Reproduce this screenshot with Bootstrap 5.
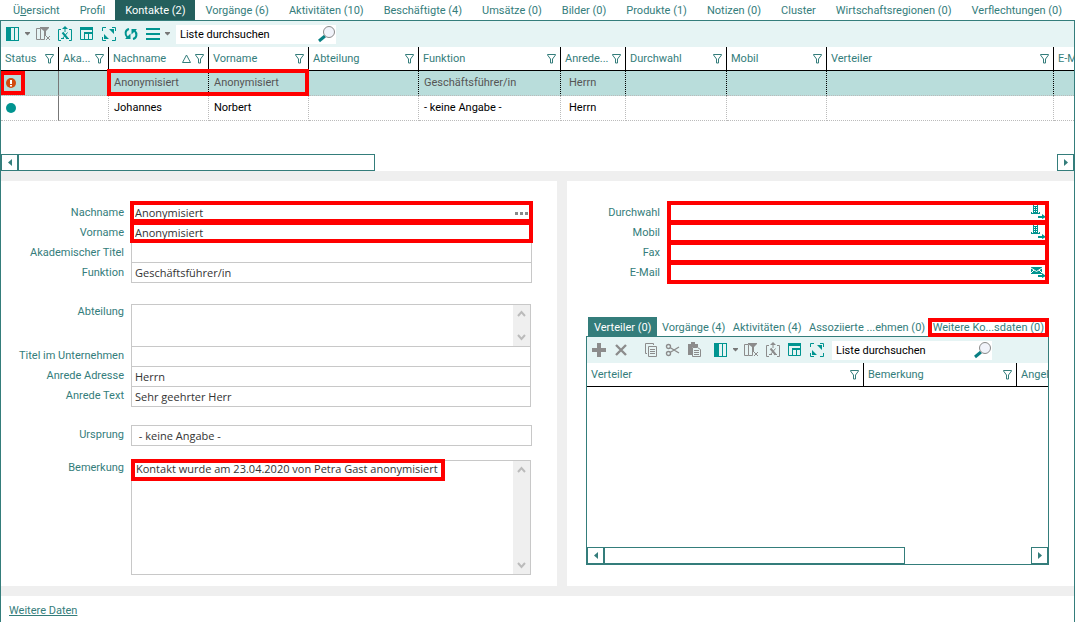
<!DOCTYPE html>
<html lang="de">
<head>
<meta charset="utf-8">
<meta name="viewport" content="width=device-width, initial-scale=1">
<title>Kontakte</title>
<link href="https://cdn.jsdelivr.net/npm/bootstrap@5.3.0/dist/css/bootstrap.min.css" rel="stylesheet">
<style>
:root{--teal:#347d7b;--dark:#245f5d;--ico:#009490;--pale:#e6f4f4;--line:#c8c8c8;--grey:#efefef}
body{font:11px/16px Roboto,"Noto Sans",sans-serif;color:#333;background:#fff}
a{color:var(--teal)}
svg{display:block;flex:none}
.ui-tabs .nav-link{padding:0 10px;line-height:22px;height:20px;color:var(--teal);white-space:nowrap;border:0;border-radius:0}
.ui-tabs .nav-link.active{background:var(--dark);color:#fff}
.main-tabs{padding:0 3px;height:20px}
.sub-tabs{padding:0 2px}
.sub-tabs .nav-link{padding:0 3px}
.sub-tabs .nav-link.active{background:var(--teal);padding:0 6px}
.frame{border:1px solid var(--teal)}
.outer{border-bottom:0;min-height:calc(100vh - 20px)}
.tools{background:var(--pale);height:26px;padding:0 4px;gap:6px}
.tools button{border:0;background:none;padding:0;color:var(--ico)}
.tools button.off{color:#8c8c8c}
.tools .caret{margin:0 -2px 0 -3px;color:#777}
.search{width:160px;height:19px;background:#fff;margin-left:1px}
.search input{border:0;outline:0;background:none;min-width:0;flex:1;padding:1px 4px 0;color:#000}
.search input::placeholder{color:#000;opacity:1}
.grid{table-layout:fixed;border-collapse:separate;border-spacing:0;width:100%;font:11px/16px Roboto,"Liberation Sans",sans-serif}
.grid th{height:24px;font-weight:400;color:var(--teal);border-right:1px solid #000;border-bottom:1px solid #000;padding:0 4px;overflow:hidden;white-space:nowrap}
.grid td{height:25px;padding:0 5px;color:#000;border-right:1px dotted #bbb;border-bottom:1px dotted #bbb;white-space:nowrap}
.grid tr.sel td{background:#b9dddb;color:#555;border-right-color:#000}
.grid tbody tr td:first-child{padding:0 4px;border-right:1px solid #777}
.grid th:last-child,.grid td:last-child{border-right:0}
.list{min-height:107px}
.hl{position:absolute;border:4px solid #f00;pointer-events:none;z-index:2}
.hl-pair{inset:-2px -101px -1px -2px}
.hl-status{inset:0 auto 0 -1px;width:25px}
.hl-row{inset:-2px -2px -1px -2px}
.hl-deep{inset:-2px -1px -2px -1px}
.hl-note{top:-2px;left:-1px;width:314px;height:22px}
.hl-tab{inset:1px -2px 0 -2px}
.hbar{height:17px}
.hbar button{width:17px;border:1px solid var(--teal);background:#fff;padding:0;color:var(--teal);display:grid;place-items:center}
.thumb{border:1px solid var(--teal)}
.band{background:var(--grey);padding:10px 0;gap:10px}
.pane{background:#fff;min-height:405px;min-width:0}
.pane-l{flex:1 1 556px;padding:21px 25px 11px 0}
.pane-r{flex:1 1 507px;padding:21px 25px 21px 19px}
.fld{height:20px}
.fld label{color:var(--teal);text-align:right;padding-right:7px;flex:none;white-space:nowrap;line-height:22px}
.pane-l label{width:130px}
.pane-r label{width:81px}
.box{position:relative;flex:1;min-width:0;border:1px solid var(--line);margin-bottom:-1px;display:flex;background:#fff}
.box input,.box textarea{font-family:"Open Sans","Noto Sans",sans-serif;border:0;outline:0;background:none;flex:1;min-width:0;padding:0 3px;color:#333;resize:none;overflow:hidden}
.short{margin-right:1px}
.up label{line-height:20px}
.tall label{line-height:16px}
.gap-a{margin-top:22px;height:42px}
.gap-b{margin-top:19px}
.gap-c{margin-top:15px;height:114px}
.vbar{width:17px;background:var(--grey);color:#bbb;padding:5px 4px}
.sub{margin-top:35px}
.sub-body{min-height:184px}
</style>
</head>
<body>
<svg width="0" height="0" class="position-absolute" aria-hidden="true">
<defs>
<symbol id="cols" viewBox="0 0 16 16"><path fill="currentColor" d="M1 1h13v14H1z"/><path fill="#e6f4f4" d="M6 2h3v12H6zM10 2h3v12h-3z"/></symbol>
<symbol id="caret" viewBox="0 0 7 16"><path fill="currentColor" d="M1 6h5v1L3.500 9.500 1 7z"/></symbol>
<symbol id="nofilter" viewBox="0 0 16 16"><path fill="none" stroke="currentColor" d="M5.500 2.500h-4v11h4v-11M5.500 13.500h4V8"/><path fill="currentColor" d="M5 1h9v1l-3 3v5H9V5L5 2z"/><path stroke="currentColor" d="M11 10l4 4m0-4l-4 4"/></symbol>
<symbol id="xls" viewBox="0 0 16 16"><path fill="none" stroke="currentColor" d="M4 3.500H1.500v11H4M12 3.500h2.500v11H12M8 2v4"/><path fill="currentColor" d="M8 0l3 3H5z"/><path stroke="currentColor" stroke-width="2" d="M5.500 6.500l5 6"/><path stroke="currentColor" d="M10.500 6.500l-5 6M4 12.500h3M9 12.500h3"/></symbol>
<symbol id="tbl" viewBox="0 0 16 16"><path fill="none" stroke="currentColor" d="M1.500 2v11.500h12V2M5.500 6.500v7M5 7h9M9.500 7v7"/><path fill="currentColor" d="M1 1h13v3H1zM5 6h9v2H5z"/></symbol>
<symbol id="expand" viewBox="0 0 16 16"><path fill="none" stroke="currentColor" d="M1.500 5V1.500H5M11 1.500h3.500V5M1.500 11v3.500H5M14.500 11v3.500H11"/><path fill="currentColor" d="M8 3h5v5zM3 8l5 5H3z"/></symbol>
<symbol id="refresh" viewBox="0 0 16 16"><path fill="none" stroke="currentColor" stroke-width="2" d="M6 3C2 4 1.500 8.500 4.500 11.500M10 13c4-1 4.500-5.500 1.500-8.500"/><path fill="currentColor" d="M2 13h5.500V7.500zM14 3H8.500v5.500z"/></symbol>
<symbol id="menu" viewBox="0 0 16 16"><path fill="currentColor" d="M1 2h14v2H1zM1 7h14v2H1zM1 12h14v2H1z"/></symbol>
<symbol id="plus" viewBox="0 0 16 16"><path fill="currentColor" d="M6 1h4v5h5v4h-5v5H6v-5H1V6h5z"/></symbol>
<symbol id="cross" viewBox="0 0 16 16"><path stroke="currentColor" stroke-width="2.400" d="M3 3l10 10M13 3L3 13"/></symbol>
<symbol id="copy" viewBox="0 0 16 16"><path fill="none" stroke="currentColor" d="M4 11.500H2.500v-10h8V3M5.500 4.500h8v10h-8zM7 7.500h5M7 9.500h5M7 11.500h5"/></symbol>
<symbol id="cut" viewBox="0 0 16 16"><g fill="none" stroke="currentColor" stroke-width="1.400"><circle cx="3.500" cy="4.500" r="2"/><circle cx="3.500" cy="11.500" r="2"/><path d="M5 5.500l9 5.500M5 10.500L14 5"/></g></symbol>
<symbol id="paste" viewBox="0 0 16 16"><path fill="currentColor" d="M1 2h3V0h4v2h3v3H5v8H1z"/><path fill="#e6f4f4" stroke="currentColor" d="M5.500 5.500h5l3 2v7h-8z"/><path stroke="currentColor" d="M7 8.500h5M7 10.500h5M7 12.500h5"/></symbol>
<symbol id="lens" viewBox="0 0 18 18"><path stroke="#087f83" stroke-width="3" d="M1 16l6-5"/><circle cx="11" cy="7" r="5.500" fill="#f1f3fa" stroke="#8a8a8a"/></symbol>
<symbol id="funnel" viewBox="0 0 9 10"><path fill="none" stroke="currentColor" d="M.5 1V.5h8V1L5.500 5v4h-2V5L.5 1z"/></symbol>
<symbol id="sort" viewBox="0 0 9 10"><path fill="none" stroke="currentColor" d="M4.500 1L8.500 8.500h-8z"/></symbol>
<symbol id="left" viewBox="0 0 4 7"><path fill="currentColor" d="M4 0v7L0 3.500z"/></symbol>
<symbol id="right" viewBox="0 0 4 7"><path fill="currentColor" d="M0 0v7l4-3.500z"/></symbol>
<symbol id="chu" viewBox="0 0 9 8"><path fill="none" stroke="currentColor" stroke-width="2" d="M1 6l3.500-4L8 6"/></symbol>
<symbol id="chd" viewBox="0 0 9 8"><path fill="none" stroke="currentColor" stroke-width="2" d="M1 2l3.500 4L8 2"/></symbol>
<symbol id="phone" viewBox="0 0 16 15"><path fill="#009490" d="M3 0h5v9h1V8h1v2H1V8h1v1h1zM8 12h4v-2l4 3-4 2v-1H8z"/><path fill="#fff" d="M4 0h3v2H4zM4 3h1v1H4zM6 3h1v1H6zM4 5h1v1H4zM6 5h1v1H6zM4 7h1v1H4zM6 7h1v1H6z"/></symbol>
<symbol id="mail" viewBox="0 0 16 15"><path fill="#009490" d="M1 3h11v7H1zM8 11h4V9l4 3-4 2v-1H8z"/><path fill="none" stroke="#fff" d="M1 4l5.500 3.500L12 4M1 9l3-3M12 9L9 6"/></symbol>
</defs>
</svg>

<nav class="nav nav-tabs ui-tabs main-tabs border-0 flex-nowrap justify-content-between">
<a class="nav-link" href="#">Ü<u>b</u>ersicht</a><a class="nav-link" href="#">Profil</a><a class="nav-link active" href="#">Kontakte (2)</a><a class="nav-link" href="#">Vorgänge (6)</a><a class="nav-link" href="#">Aktivitäten (10)</a><a class="nav-link" href="#">Beschäftigte (4)</a><a class="nav-link" href="#">Umsätze (0)</a><a class="nav-link" href="#">Bilder (0)</a><a class="nav-link" href="#">Produkte (1)</a><a class="nav-link" href="#">Notizen (0)</a><a class="nav-link" href="#">Cluster</a><a class="nav-link" href="#">Wirtschaftsregionen (0)</a><a class="nav-link" href="#">Verflechtungen (0)</a>
</nav>

<main class="frame outer">
<div class="tools d-flex align-items-center" role="toolbar">
<button aria-label="Spalten"><svg width="16" height="16"><use href="#cols"/></svg></button>
<button class="caret" aria-label="Spaltenmenü"><svg width="7" height="16"><use href="#caret"/></svg></button>
<button class="off" aria-label="Filter entfernen"><svg width="16" height="16"><use href="#nofilter"/></svg></button>
<button aria-label="Excel-Export"><svg width="16" height="16"><use href="#xls"/></svg></button>
<button aria-label="Tabelle"><svg width="16" height="16"><use href="#tbl"/></svg></button>
<button aria-label="Vergrößern"><svg width="16" height="16"><use href="#expand"/></svg></button>
<button aria-label="Aktualisieren"><svg width="16" height="16"><use href="#refresh"/></svg></button>
<button aria-label="Menü"><svg width="16" height="16"><use href="#menu"/></svg></button>
<button class="caret" aria-label="Weitere Aktionen"><svg width="7" height="16"><use href="#caret"/></svg></button>
<div class="search d-flex align-items-center"><input type="text" aria-label="Liste durchsuchen" placeholder="Liste durchsuchen"><svg width="18" height="18"><use href="#lens"/></svg></div>
</div>

<section class="list d-flex flex-column justify-content-between overflow-hidden">
<table class="grid">
<colgroup><col style="width:58px"><col style="width:50px"><col style="width:100px"><col style="width:100px"><col style="width:110px"><col style="width:142px"><col style="width:65px"><col style="width:101px"><col style="width:100px"><col style="width:227px"><col></colgroup>
<thead><tr>
<th><div class="d-flex justify-content-between align-items-center">Status<svg width="9" height="10"><use href="#funnel"/></svg></div></th>
<th><div class="d-flex justify-content-between align-items-center">Aka...<svg width="9" height="10"><use href="#funnel"/></svg></div></th>
<th><div class="d-flex align-items-center gap-1"><span class="me-auto">Nachname</span><svg width="9" height="10"><use href="#sort"/></svg><svg width="9" height="10"><use href="#funnel"/></svg></div></th>
<th><div class="d-flex justify-content-between align-items-center">Vorname<svg width="9" height="10"><use href="#funnel"/></svg></div></th>
<th><div class="d-flex justify-content-between align-items-center">Abteilung<svg width="9" height="10"><use href="#funnel"/></svg></div></th>
<th><div class="d-flex justify-content-between align-items-center">Funktion<svg width="9" height="10"><use href="#funnel"/></svg></div></th>
<th><div class="d-flex justify-content-between align-items-center">Anrede...<svg width="9" height="10"><use href="#funnel"/></svg></div></th>
<th><div class="d-flex justify-content-between align-items-center">Durchwahl<svg width="9" height="10"><use href="#funnel"/></svg></div></th>
<th><div class="d-flex justify-content-between align-items-center">Mobil<svg width="9" height="10"><use href="#funnel"/></svg></div></th>
<th><div class="d-flex justify-content-between align-items-center">Verteiler<svg width="9" height="10"><use href="#funnel"/></svg></div></th>
<th class="pe-0">E-Mail</th>
</tr></thead>
<tbody>
<tr class="sel"><td class="position-relative"><svg width="12" height="12" viewBox="0 0 12 12"><circle cx="6" cy="6" r="5" fill="#d2490e"/><path stroke="#fff" stroke-width="2" d="M6 3v4M6 8v1.500"/></svg><span class="hl hl-status"></span></td><td></td><td class="position-relative">Anonymisiert<span class="hl hl-pair"></span></td><td>Anonymisiert</td><td></td><td>Geschäftsführer/in</td><td class="ps-2">Herrn</td><td></td><td></td><td></td><td></td></tr>
<tr><td><svg width="12" height="12" viewBox="0 0 12 12"><circle cx="6" cy="6" r="5" fill="#009490"/></svg></td><td></td><td>Johannes</td><td>Norbert</td><td></td><td>- keine Angabe -</td><td class="ps-2">Herrn</td><td></td><td></td><td></td><td></td></tr>
</tbody>
</table>
</section>
<div class="hbar d-flex"><button aria-label="Nach links"><svg width="4" height="7"><use href="#left"/></svg></button><div class="thumb" style="width:33.300%"></div><button class="ms-auto" aria-label="Nach rechts"><svg width="4" height="7"><use href="#right"/></svg></button></div>

<div class="band d-flex">
<form class="pane pane-l">
<div class="fld d-flex"><label for="nn">Nachname</label><div class="box"><input id="nn" value="Anonymisiert"><svg width="16" height="19" fill="#888"><path d="M0 9h3v3H0zM5 9h3v3H5zM10 9h3v3h-3z"/></svg><span class="hl hl-row"></span></div></div>
<div class="fld d-flex"><label for="vn">Vorname</label><div class="box"><input id="vn" value="Anonymisiert"><span class="hl hl-row"></span></div></div>
<div class="fld d-flex"><label for="at">Akademischer Titel</label><div class="box"><input id="at"></div></div>
<div class="fld d-flex"><label for="fu">Funktion</label><div class="box"><input id="fu" value="Geschäftsführer/in"></div></div>
<div class="fld d-flex tall gap-a"><label for="ab">Abteilung</label><div class="box short"><textarea id="ab"></textarea><div class="vbar d-flex flex-column justify-content-between"><svg width="9" height="8"><use href="#chu"/></svg><svg width="9" height="8"><use href="#chd"/></svg></div></div></div>
<div class="fld d-flex up"><label for="tu">Titel im Unternehmen</label><div class="box short"><input id="tu"></div></div>
<div class="fld d-flex up"><label for="aa">Anrede Adresse</label><div class="box short"><input id="aa" value="Herrn"></div></div>
<div class="fld d-flex up"><label for="ax">Anrede Text</label><div class="box short"><input id="ax" value="Sehr geehrter Herr"></div></div>
<div class="fld d-flex up gap-b"><label for="ur">Ursprung</label><div class="box"><input id="ur" class="ps-1" value=" - keine Angabe -"></div></div>
<div class="fld d-flex tall gap-c"><label for="be">Bemerkung</label><div class="box short"><textarea id="be" class="ps-1">Kontakt wurde am 23.04.2020 von Petra Gast anonymisiert</textarea><div class="vbar d-flex flex-column justify-content-between"><svg width="9" height="8"><use href="#chu"/></svg><svg width="9" height="8"><use href="#chd"/></svg></div><span class="hl hl-note"></span></div></div>
</form>

<div class="pane pane-r">
<form>
<div class="fld d-flex"><label for="dw">Durchwahl</label><div class="box"><input id="dw"><svg width="18" height="17"><use href="#phone" y="1" width="16" height="15"/></svg><span class="hl hl-deep"></span></div></div>
<div class="fld d-flex"><label for="mo">Mobil</label><div class="box"><input id="mo"><svg width="18" height="17"><use href="#phone" y="1" width="16" height="15"/></svg><span class="hl hl-deep"></span></div></div>
<div class="fld d-flex"><label for="fx">Fax</label><div class="box"><input id="fx"><span class="hl hl-deep"></span></div></div>
<div class="fld d-flex"><label for="em">E-Mail</label><div class="box"><input id="em"><svg width="18" height="17"><use href="#mail" y="1" width="16" height="15"/></svg><span class="hl hl-deep"></span></div></div>
</form>
<section class="sub">
<nav class="nav nav-tabs ui-tabs sub-tabs border-0 flex-nowrap justify-content-between"><a class="nav-link active" href="#">Verteiler (0)</a><a class="nav-link" href="#">Vorgänge (4)</a><a class="nav-link" href="#">Aktivitäten (4)</a><a class="nav-link" href="#">Assoziierte ...ehmen (0)</a><a class="nav-link position-relative" href="#">Weitere Ko...sdaten (0)<span class="hl hl-tab"></span></a></nav>
<div class="frame">
<div class="tools d-flex align-items-center" role="toolbar">
<button class="off" aria-label="Neu"><svg width="16" height="16"><use href="#plus"/></svg></button>
<button class="off me-2" aria-label="Löschen"><svg width="16" height="16"><use href="#cross"/></svg></button>
<button class="off" aria-label="Kopieren"><svg width="16" height="16"><use href="#copy"/></svg></button>
<button class="off" aria-label="Ausschneiden"><svg width="16" height="16"><use href="#cut"/></svg></button>
<button class="off me-1" aria-label="Einfügen"><svg width="16" height="16"><use href="#paste"/></svg></button>
<button aria-label="Spalten"><svg width="16" height="16"><use href="#cols"/></svg></button>
<button class="caret" aria-label="Spaltenmenü"><svg width="7" height="16"><use href="#caret"/></svg></button>
<button class="off" aria-label="Filter entfernen"><svg width="16" height="16"><use href="#nofilter"/></svg></button>
<button class="off" aria-label="Excel-Export"><svg width="16" height="16"><use href="#xls"/></svg></button>
<button aria-label="Tabelle"><svg width="16" height="16"><use href="#tbl"/></svg></button>
<button aria-label="Vergrößern"><svg width="16" height="16"><use href="#expand"/></svg></button>
<div class="search d-flex align-items-center"><input type="text" aria-label="Liste durchsuchen" placeholder="Liste durchsuchen"><svg width="18" height="18"><use href="#lens"/></svg></div>
</div>
<div class="sub-body overflow-hidden">
<table class="grid"><colgroup><col><col style="width:153px"><col style="width:31px"></colgroup><thead><tr>
<th><div class="d-flex justify-content-between align-items-center">Verteiler<svg width="9" height="10"><use href="#funnel"/></svg></div></th>
<th><div class="d-flex justify-content-between align-items-center">Bemerkung<svg width="9" height="10"><use href="#funnel"/></svg></div></th>
<th class="pe-0">Angelegt</th></tr></thead></table>
</div>
<div class="hbar d-flex"><button aria-label="Nach links"><svg width="4" height="7"><use href="#left"/></svg></button><div class="thumb" style="width:65.200%"></div><button class="ms-auto" aria-label="Nach rechts"><svg width="4" height="7"><use href="#right"/></svg></button></div>
</div>
</section>
</div>
</div>
<footer class="px-2 py-1 lh-lg"><a href="#">Weitere Daten</a></footer>
</main>
<script src="https://cdn.jsdelivr.net/npm/bootstrap@5.3.0/dist/js/bootstrap.bundle.min.js"></script>
</body>
</html>
